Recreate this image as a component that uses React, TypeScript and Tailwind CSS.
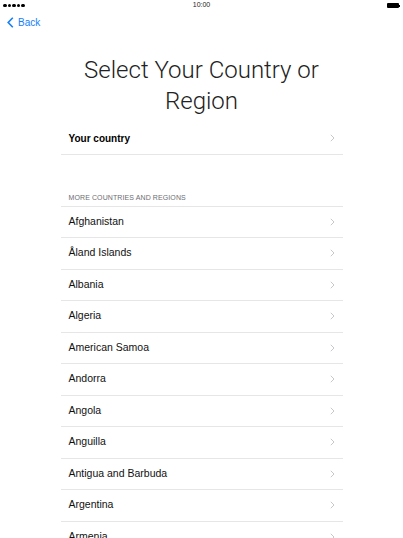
import React from "react";

const countries = [
  "Afghanistan",
  "Åland Islands",
  "Albania",
  "Algeria",
  "American Samoa",
  "Andorra",
  "Angola",
  "Anguilla",
  "Antigua and Barbuda",
  "Argentina",
  "Armenia",
];

function Chevron() {
  return (
    <svg width="5" height="8" viewBox="0 0 5 8" className="shrink-0">
      <path d="M0.8 0.8 L4 4 L0.8 7.2" fill="none" stroke="#c7c7cc" strokeWidth="1" />
    </svg>
  );
}

export default function App() {
  return (
    <div
      className="w-[403px] h-[538px] overflow-hidden bg-white text-black"
      style={{ fontFamily: '"Liberation Sans", Arial, sans-serif' }}
    >
      {/* status bar */}
      <div className="relative flex h-[11px] items-center justify-between px-[3px]">
        <div className="flex gap-[1px]">
          {[0, 1, 2, 3, 4].map((i) => (
            <div key={i} className="h-[3.5px] w-[3.5px] rounded-full bg-black" />
          ))}
        </div>
        <div className="absolute left-0 right-0 top-0 flex h-[11px] items-center justify-center text-[7px] text-[#222]">
          10:00
        </div>
        <div className="flex items-center">
          <div className="h-[5px] w-[12px] rounded-[1px] bg-black" />
          <div className="h-[2px] w-[1px] bg-black" />
        </div>
      </div>

      {/* nav */}
      <div className="flex h-[22px] items-center gap-[4px] pl-[7px] text-[#157efb]">
        <svg width="7" height="11" viewBox="0 0 7 11">
          <path d="M5.8 0.8 L1.2 5.5 L5.8 10.2" fill="none" stroke="#157efb" strokeWidth="1.6" />
        </svg>
        <span className="text-[10px]">Back</span>
      </div>

      {/* title */}
      <div
        className="mt-[22px] text-center text-[24px] font-light leading-[31px] text-[#222]"
        style={{ fontFamily: 'Roboto, "Liberation Sans", sans-serif' }}
      >
        Select Your Country or
        <br />
        Region
      </div>

      <div className="mx-auto mt-[6px] w-[282px]">
        <div className="flex h-[31.5px] items-center justify-between border-b border-[#e6e6e6] pl-[8px] pr-[8px]">
          <span className="text-[10px] font-bold">Your country</span>
          <Chevron />
        </div>

        <div className="flex h-[51px] items-end pb-[2px] pl-[8px] text-[7px] tracking-[0.1px] text-[#6d6d72]">
          MORE COUNTRIES AND REGIONS
        </div>

        <div className="border-t border-[#e6e6e6]">
          {countries.map((c) => (
            <div
              key={c}
              className="box-border flex h-[31.5px] items-center justify-between border-b border-[#e6e6e6] pl-[8px] pr-[8px]"
            >
              <span className="text-[10.5px] text-[#111]">{c}</span>
              <Chevron />
            </div>
          ))}
        </div>
      </div>
    </div>
  );
}
